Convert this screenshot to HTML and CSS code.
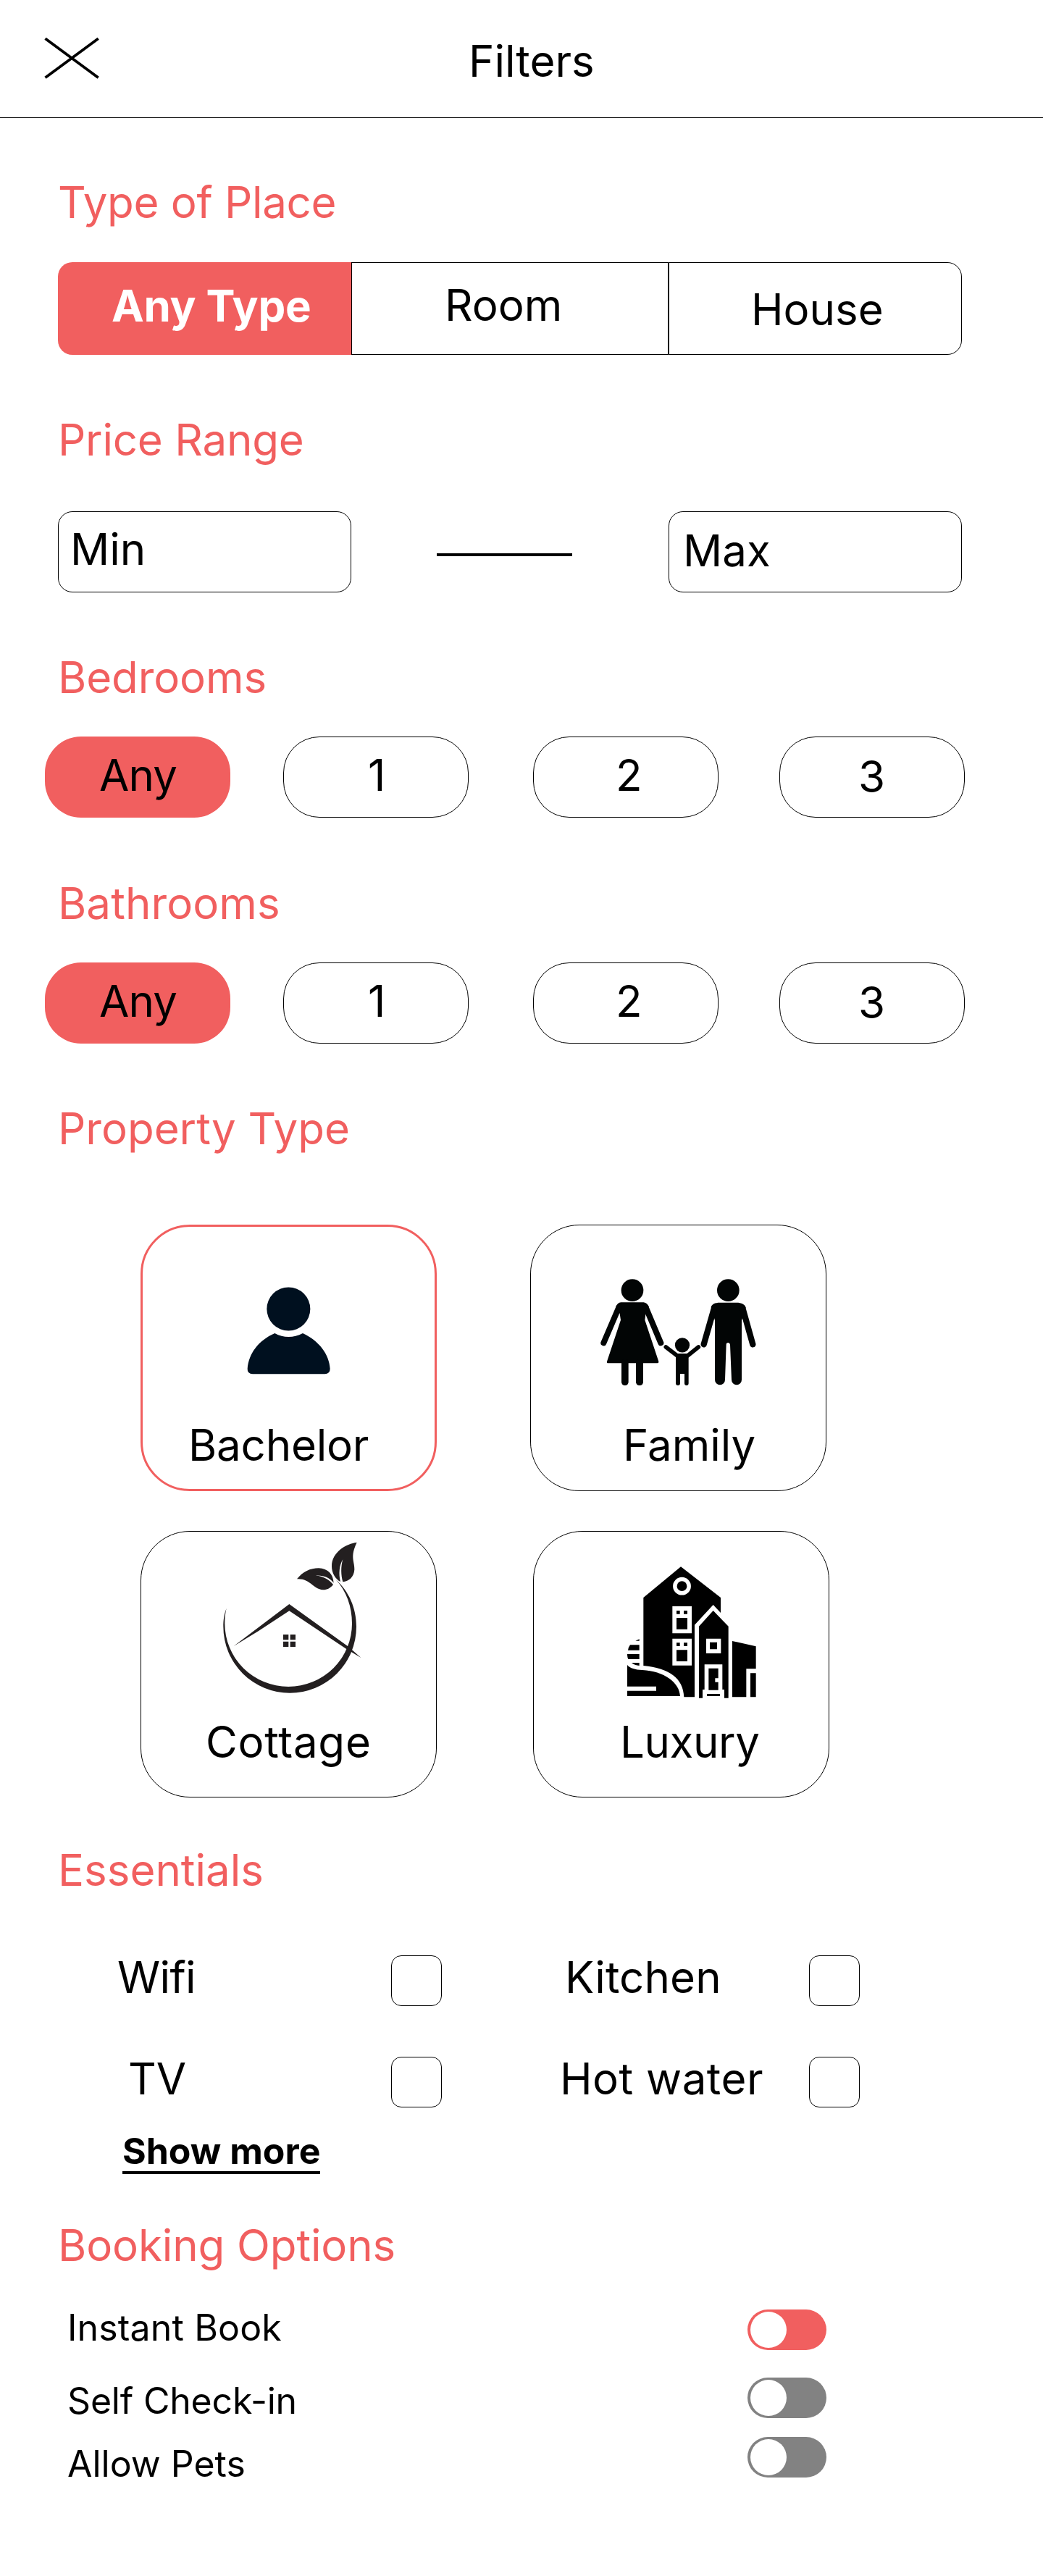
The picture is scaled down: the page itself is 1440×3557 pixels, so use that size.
FILE: index.html
```html
<!DOCTYPE html>
<html lang="en">
<head>
<meta charset="utf-8">
<title>Filters</title>
<link rel="stylesheet" href="styles.css">
</head>
<body>
<header class="topbar">
  <svg class="close" width="78" height="58" viewBox="0 0 78 58" fill="none" stroke="#000" stroke-width="3.8"><path d="M2.500 2.200L75.700 56.200M75.700 2.200L2.500 56.200"/></svg>
  <h1 class="title">Filters</h1>
</header>
<main>
  <h2 class="heading heading-type">Type of Place</h2>
  <div class="segments">
    <div class="segment segment-active">Any Type</div>
    <div class="segment segment-room">Room</div>
    <div class="segment segment-house">House</div>
  </div>

  <h2 class="heading heading-price">Price Range</h2>
  <div class="range">
    <div class="field field-min">Min</div>
    <div class="dash"></div>
    <div class="field field-max">Max</div>
  </div>

  <h2 class="heading heading-bed">Bedrooms</h2>
  <div class="pills">
    <div class="pill pill-any">Any</div>
    <div class="pill pill-one">1</div>
    <div class="pill pill-two">2</div>
    <div class="pill pill-three">3</div>
  </div>

  <h2 class="heading heading-bath">Bathrooms</h2>
  <div class="pills">
    <div class="pill pill-any">Any</div>
    <div class="pill pill-one">1</div>
    <div class="pill pill-two">2</div>
    <div class="pill pill-three">3</div>
  </div>

  <h2 class="heading heading-property">Property Type</h2>
  <div class="cards">
    <div class="card card-bachelor">
      <div class="art">
        <svg width="116" height="121" viewBox="480 321 348 363" fill="#00101f">
          <circle cx="655" cy="412.500" r="90"/>
          <path d="M598 513C634 533 676 533 714 513C780 543 824 600 827 660Q827 682 805 682H507Q484 682 485 660C490 597 530 543 598 513Z"/>
        </svg>
      </div>
      <div class="label">Bachelor</div>
    </div>
    <div class="card card-family">
      <div class="art">
        <svg width="215" height="148" viewBox="327 288 645 444" fill="#020505">
          <circle cx="459" cy="335" r="46"/>
          <path d="M412 385H506C516 386 524 394 528 404L514 434L511 458L568 630Q569 637 563 637H359Q352 637 354 630L411 458L407 432L391 402C396 392 402 386 412 385Z"/>
          <path d="M403 406L340 553M515 406L577 553" fill="none" stroke="#020505" stroke-width="24" stroke-linecap="round"/>
          <rect x="414" y="620" width="29" height="109" rx="14"/>
          <rect x="474" y="620" width="30" height="109" rx="14"/>
          <circle cx="666" cy="562" r="30.500"/>
          <path d="M641 597H691V606H692V720Q692 729 683.500 729Q675 729 675 720V681H657V720Q657 729 648 729Q639 729 639 720V606Z"/>
          <path d="M598 570L645 606M733 570L688 606" fill="none" stroke="#020505" stroke-width="17" stroke-linecap="round"/>
          <circle cx="856" cy="335" r="46"/>
          <path d="M785 405C789 392 800 386 822 386H890C912 386 925 393 929 406L912 460V706A20.500 20.500 0 0 1 870 706L864 560Q863 552 856 552Q848 552 848 560L843 706A21 21 0 0 1 801 706V460Z"/>
          <path d="M798 409L755 559M916 409L958 559" fill="none" stroke="#020505" stroke-width="25" stroke-linecap="round"/>
        </svg>
      </div>
      <div class="label">Family</div>
    </div>
    <div class="card card-cottage">
      <div class="art">
        <svg width="192" height="210" viewBox="381 117 576 630" fill="#231f20">
          <path d="M398 392C388 418 385 440 385 468A275.500 275.500 0 0 0 936 468C936 390 905 322 850 272C895 320 918 385 918 455A263.500 262 0 0 1 391 455C391 430 393 412 398 392Z"/>
          <path d="M428 549L658 375L903 551L955 597L896 562L658 403L530 487Z"/>
          <path d="M633 501h22v22h-22zM662 501h22v22h-22zM633 530h22v22h-22zM662 530h22v22h-22z"/>
          <path d="M938 120C895 124 834 160 834 218C834 245 848 270 870 282C862 250 865 215 880 190C871 220 872 255 880 283C905 280 926 264 928 232C930 200 908 180 938 120Z"/>
          <path d="M690 271C715 240 745 226 780 226C818 228 840 250 842 287C825 265 800 255 768 257C800 258 825 275 840 294C830 308 815 316 798 316C755 312 745 268 690 271Z"/>
        </svg>
      </div>
      <div class="label">Cottage</div>
    </div>
    <div class="card card-luxury">
      <div class="art">
        <svg width="180" height="183" viewBox="435 219 540 549">
          <path d="M505 348L660 220L825 348V411L794 378L717 461V760H673C670 680 610 640 505 630Z"/>
          <circle cx="664.500" cy="300.500" r="29" fill="none" stroke="#fff" stroke-width="16.500"/>
          <path fill="#fff" d="M625 384h80v112h-80zM625 518h80v111h-80z"/>
          <path d="M642 402h14v14h-14zM672 402h15v14h-15zM642 432h45v47h-45zM642 535h14v14h-14zM672 535h15v14h-15zM642 565h45v47h-45z"/>
          <path d="M735 467L794 402L857 467V764H735Z"/>
          <path fill="#fff" d="M765 518h61v61h-61zM758 625h74v104h8v37h-90v-37h8z"/>
          <path d="M780 533h30v29h-30zM775 641h40v41h-13v16h13v33h-40zM768 747h54v9h-54z"/>
          <path d="M873 528L971 550V643H931V760H873ZM948 661h23v99h-23z"/>
          <path d="M438 627C450 641 470 647 500 648C590 652 655 700 657 756H438V734H558V716H438Z"/>
          <path d="M472 527L488 520V527ZM450 544H488V566H441Q443 553 450 544ZM438 582H488V603H442Q438 595 438 582ZM456 618H488V630Q468 628 456 618Z"/>
        </svg>
      </div>
      <div class="label">Luxury</div>
    </div>
  </div>

  <h2 class="heading heading-essentials">Essentials</h2>
  <div class="checks">
    <span class="check-label check-wifi">Wifi</span><span class="box"></span>
    <span class="check-label check-kitchen">Kitchen</span><span class="box"></span>
    <span class="check-label check-tv">TV</span><span class="box"></span>
    <span class="check-label check-water">Hot water</span><span class="box"></span>
  </div>
  <a class="more">Show more</a>

  <h2 class="heading heading-booking">Booking Options</h2>
  <div class="options">
    <div class="option option-instant"><span>Instant Book</span><i class="toggle toggle-on"></i></div>
    <div class="option option-self"><span>Self Check-in</span><i class="toggle"></i></div>
    <div class="option option-pets"><span>Allow Pets</span><i class="toggle"></i></div>
  </div>
</main>
</body>
</html>
```
FILE: styles.css
```css
* { box-sizing: border-box; }
body {
  margin: 0;
  width: 1440px;
  height: 3557px;
  background: #fff;
  color: #000;
  font: 400 60px/72px Inter, sans-serif;
}
svg { display: block; flex: none; }
main { display: flow-root; }

.topbar {
  display: flex;
  height: 163px;
  border-bottom: 1px solid #000;
}
.close { margin: 51px 0 0 60px; }
.title {
  margin: 48px 0 0 509px;
  font-size: 60px;
  font-weight: 400;
}

.heading {
  height: 72px;
  margin: 0 0 0 80px;
  color: #f15f5f;
  font-size: 60px;
  font-weight: 400;
}
.heading-type { margin-top: 80px; margin-bottom: 47px; letter-spacing: -0.3px; }
.heading-price { margin-top: 81px; margin-bottom: 63px; letter-spacing: -0.2px; }
.heading-bed { margin-top: 81px; margin-bottom: 46px; letter-spacing: -0.1px; }
.heading-bath { margin-top: 82px; margin-bottom: 46px; letter-spacing: 0.1px; }
.heading-property { margin-top: 81px; margin-bottom: 97px; }
.heading-essentials { margin-top: 64px; margin-bottom: 82px; }
.heading-booking { margin-top: 62px; margin-bottom: 48px; letter-spacing: -0.1px; }

.segments {
  display: flex;
  width: 1248px;
  height: 128px;
  margin-left: 80px;
}
.segment { border: 1px solid #000; }
.segment-active {
  width: 405px;
  padding: 24px 0 0 74px;
  border: 0;
  border-radius: 20px 0 0 20px;
  background: #f15f5f;
  color: #fff;
  font-weight: 700;
  letter-spacing: -0.25px;
}
.segment-room { width: 438px; padding: 22px 0 0 128px; }
.segment-house {
  width: 405px;
  padding: 28px 0 0 113px;
  border-radius: 0 20px 20px 0;
}

.range {
  display: flex;
  width: 1248px;
  height: 112px;
  margin-left: 80px;
}
.field {
  width: 405px;
  border: 1px solid #000;
  border-radius: 20px;
}
.field-min { padding: 15px 0 0 16px; }
.field-max { padding: 17px 0 0 19px; }
.dash { width: 187px; height: 4px; margin: 58px 133px 0 118px; background: #000; }

.pills {
  display: grid;
  grid-template-columns: 329px 345px 340px 256px;
  height: 112px;
  margin-left: 62px;
}
.pill {
  width: 256px;
  height: 112px;
  border: 1px solid #000;
  border-radius: 50px;
}
.pill-any { padding: 17px 0 0 75px; border: 0; background: #f15f5f; letter-spacing: -0.8px; }
.pill-one { padding: 16px 0 0 116px; }
.pill-two { padding: 16px 0 0 113px; }
.pill-three { padding: 18px 0 0 108px; }

.cards {
  display: grid;
  grid-template-columns: 409px 413px;
  column-gap: 129px;
  row-gap: 55px;
  margin-left: 194px;
}
.card {
  width: 409px;
  height: 368px;
  border: 1px solid #000;
  border-radius: 68px;
}
.card-bachelor { border: 3px solid #f15f5f; }
.card-luxury { margin-left: 4px; }
.card-bachelor .art { height: 265px; padding: 83px 0 0 143px; }
.card-family .art { height: 267px; padding: 74px 0 0 96px; }
.card-cottage .art { height: 254px; padding: 14px 0 0 112px; }
.card-luxury .art { height: 254px; padding: 48px 0 0 128px; }
.card-bachelor .label { padding-left: 63px; letter-spacing: -0.2px; }
.card-family .label { padding-left: 127px; }
.card-cottage .label { padding-left: 89px; letter-spacing: 0.75px; }
.card-luxury .label { padding-left: 119px; letter-spacing: -0.4px; }

.checks {
  display: grid;
  grid-template-columns: 460px 70px 507px 70px;
  grid-auto-rows: 70px;
  row-gap: 70px;
  margin-left: 80px;
}
.check-label { margin-top: -6px; }
.check-wifi { padding-left: 82px; letter-spacing: -0.6px; }
.check-kitchen { padding-left: 170px; letter-spacing: 0.1px; }
.check-tv { padding-left: 97px; }
.check-water { padding-left: 163px; letter-spacing: 0.5px; }
.box { border: 1px solid #000; border-radius: 14px; }
.more {
  display: block;
  width: 273px;
  height: 62px;
  margin: 30px 0 0 169px;
  border-bottom: 4px solid #000;
  font-size: 50px;
  font-weight: 700;
  line-height: 60px;
  white-space: nowrap;
}

.options { margin-left: 93px; font-size: 50px; line-height: 60px; }
.option {
  display: flex;
  justify-content: space-between;
  align-items: flex-start;
  width: 1048px;
}
.option-instant { height: 99px; letter-spacing: 0.15px; }
.option-instant .toggle { margin-top: 5px; }
.option-self { height: 82px; letter-spacing: -0.2px; }
.option-self span { margin-top: 2px; }
.option-pets span { margin-top: 7px; }
.toggle {
  width: 109px;
  height: 56px;
  padding: 3px 4px;
  border-radius: 28px;
  background: #828282;
}
.toggle::before {
  content: "";
  display: block;
  width: 50px;
  height: 50px;
  border-radius: 50%;
  background: #fff;
}
.toggle-on { background: #f15f5f; }
```
